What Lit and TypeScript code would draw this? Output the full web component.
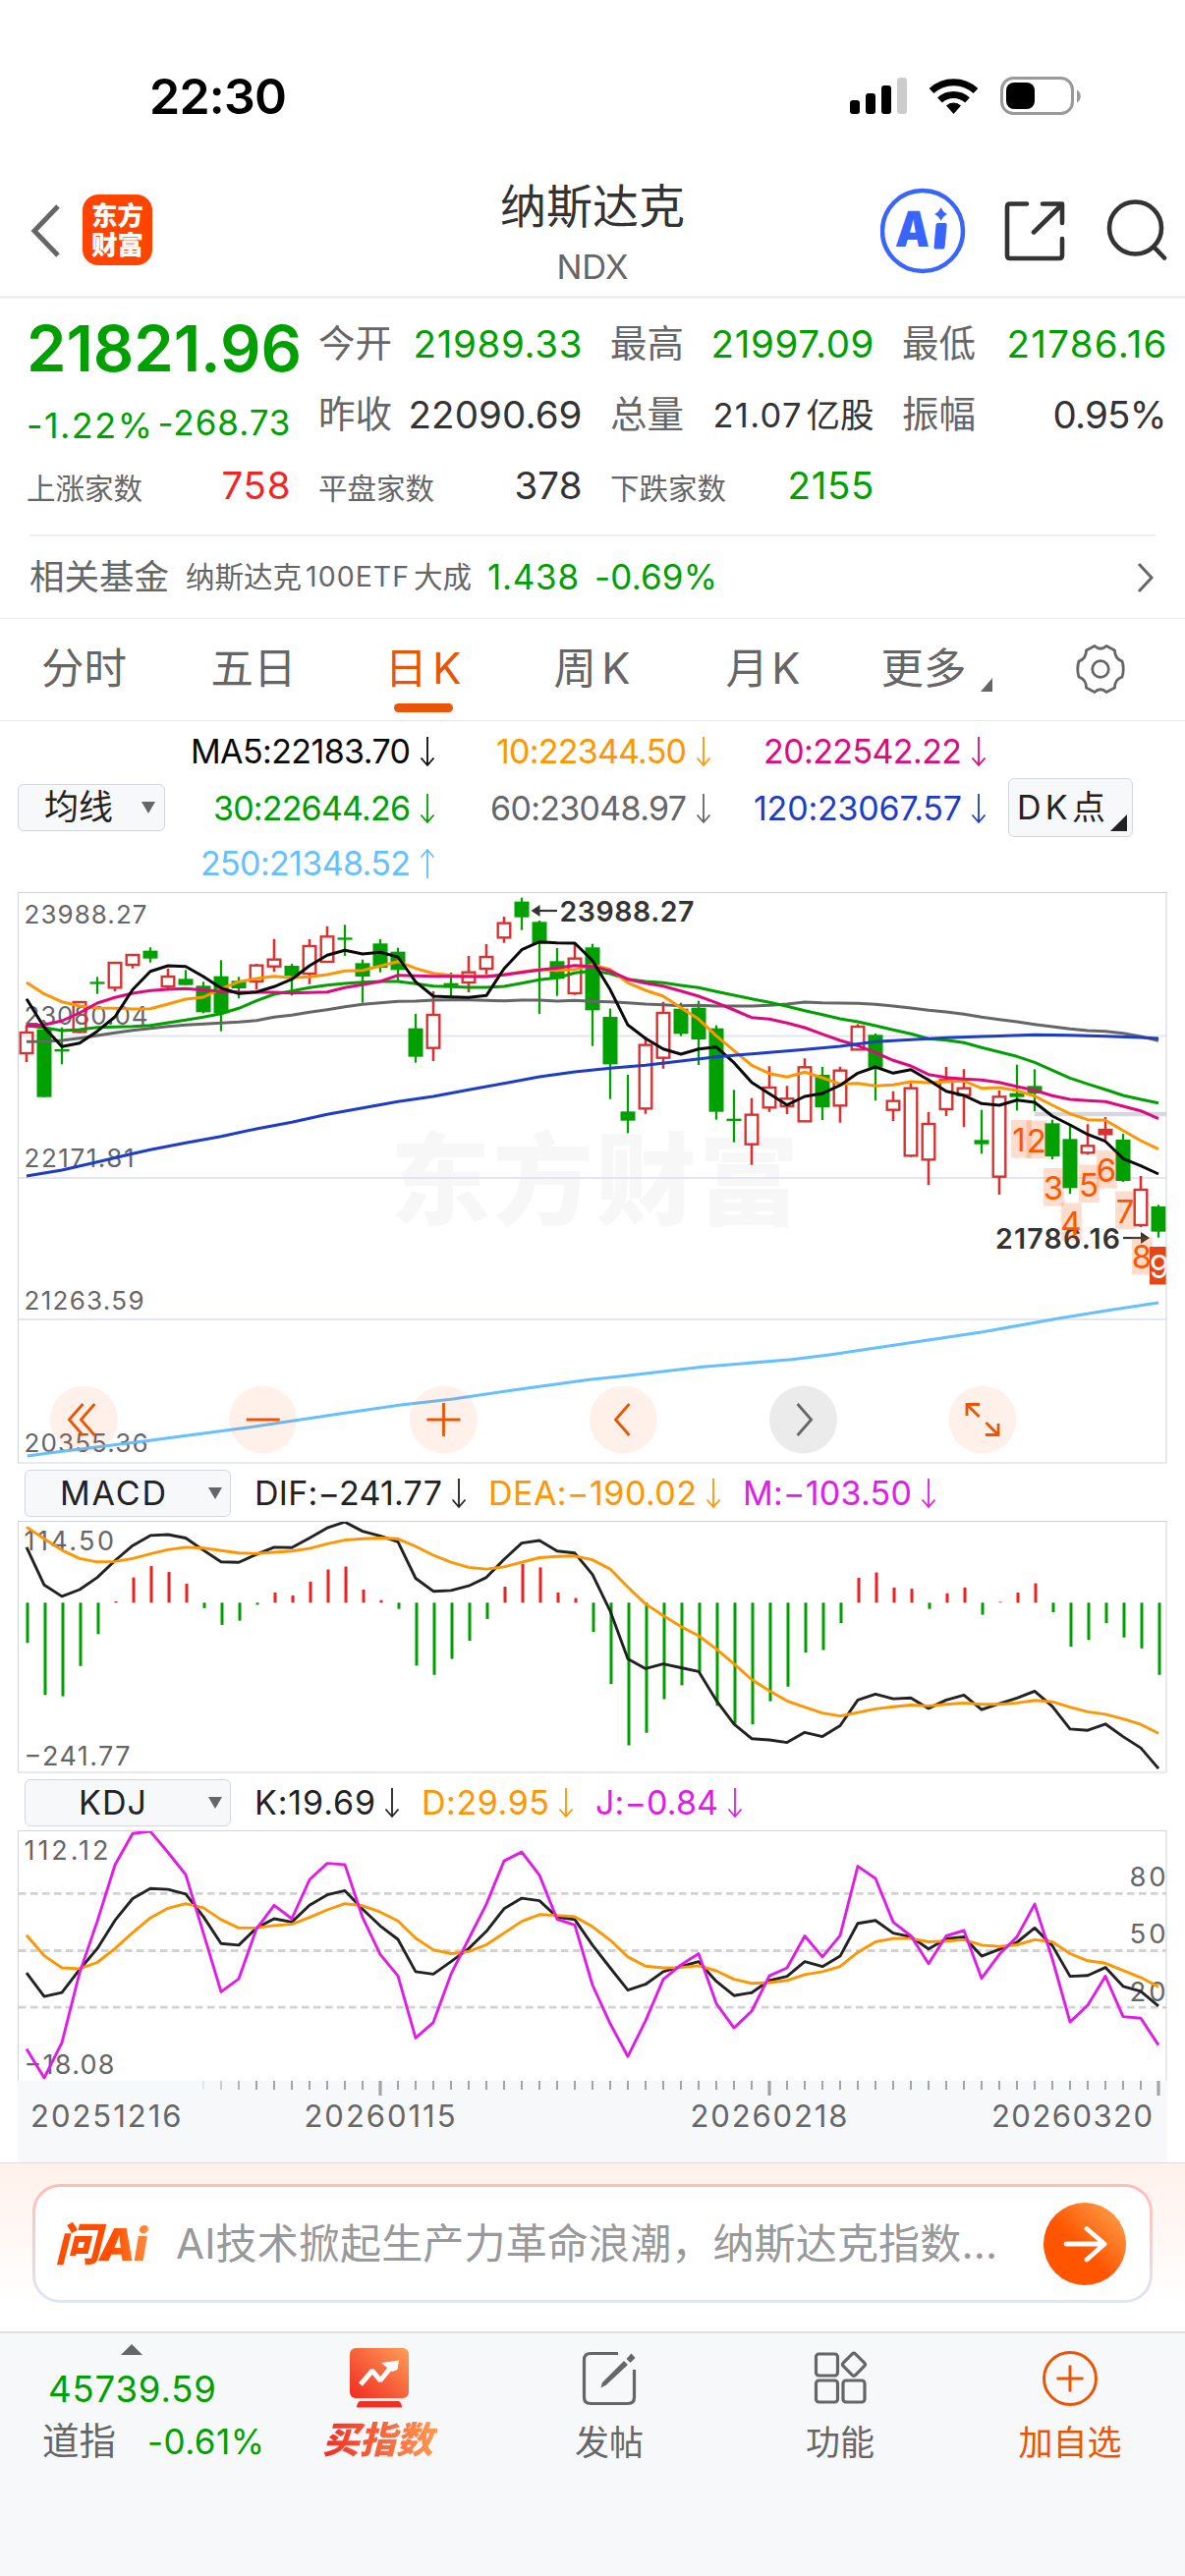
import { LitElement, html, css, svg } from "lit";
import { customElement, property } from "lit/decorators.js";

const STEP = 18;
const X0 = 27;
const LEFT = 18;
const WIDTH = 1170;

const GREEN = "#00a000";
const RED = "#d63232";

/** Candles as [up?, high, bodyTop, bodyBottom, low] in thirds of a pixel below the plot origin. */
const CANDLES: [number, number, number, number, number][] = [
  [1, 430, 453, 516, 543], [0, 443, 443, 650, 650], [0, 437, 504, 509, 550], [1, 360, 360, 451, 455],
  [0, 283, 298, 301, 335], [1, 238, 240, 316, 327], [1, 214, 216, 246, 257], [0, 193, 203, 227, 239],
  [1, 258, 282, 312, 318], [0, 262, 289, 308, 308], [0, 298, 310, 391, 394], [0, 232, 281, 394, 449],
  [0, 283, 295, 318, 349], [1, 243, 248, 297, 322], [1, 167, 230, 251, 268], [0, 243, 249, 280, 340],
  [1, 168, 189, 273, 305], [1, 128, 160, 237, 240], [0, 124, 163, 169, 219], [0, 230, 241, 282, 362],
  [0, 168, 181, 255, 269], [0, 194, 206, 262, 296], [0, 396, 440, 527, 545], [1, 327, 399, 500, 540],
  [0, 270, 302, 305, 345], [1, 219, 269, 300, 330], [1, 183, 222, 258, 275], [1, 99, 119, 163, 179],
  [0, 41, 53, 101, 140], [0, 111, 115, 182, 396], [0, 195, 235, 289, 341], [1, 182, 227, 333, 338],
  [0, 182, 193, 385, 494], [0, 380, 405, 550, 656], [0, 582, 694, 722, 760], [1, 466, 491, 685, 701],
  [1, 359, 393, 530, 563], [0, 362, 380, 457, 464], [0, 356, 377, 474, 552], [0, 431, 440, 695, 719],
  [0, 628, 716, 720, 788], [1, 653, 704, 794, 857], [1, 556, 621, 682, 695], [1, 616, 655, 678, 702],
  [1, 532, 559, 724, 725], [0, 558, 582, 681, 720], [1, 557, 569, 676, 728], [1, 427, 435, 505, 505],
  [0, 456, 460, 560, 661], [1, 632, 662, 689, 723], [1, 607, 623, 829, 833], [1, 695, 732, 841, 919],
  [1, 558, 598, 687, 708], [1, 565, 623, 644, 742], [0, 689, 781, 794, 823], [1, 630, 649, 893, 948],
  [0, 551, 638, 650, 691], [0, 565, 616, 639, 693], [0, 719, 730, 831, 840], [0, 735, 778, 928, 945],
  [1, 733, 799, 820, 826], [1, 711, 750, 763, 780], [0, 762, 780, 906, 909], [1, 891, 933, 1041, 1047],
  [0, 979, 984, 1061, 1079],
];

const MA5 = [350, 437, 496, 485, 449, 405, 322, 266, 249, 251, 282, 317, 334, 329, 313, 290, 249, 217, 202, 213, 208, 222, 298, 342, 344, 346, 340, 258, 200, 176, 179, 180, 233, 322, 430, 471, 503, 519, 503, 497, 545, 605, 640, 674, 648, 639, 614, 577, 558, 577, 566, 598, 632, 645, 670, 675, 659, 666, 708, 735, 764, 785, 838, 860, 885];
const MA10 = [300, 335, 359, 372, 378, 379, 381, 380, 366, 351, 345, 319, 298, 288, 281, 286, 283, 276, 265, 263, 250, 236, 257, 272, 278, 281, 281, 276, 268, 260, 263, 260, 246, 260, 301, 324, 342, 377, 412, 463, 508, 553, 578, 589, 574, 591, 610, 608, 616, 613, 603, 606, 603, 601, 623, 621, 630, 647, 675, 701, 719, 721, 752, 783, 809];
const MA20 = [432, 430, 417, 393, 363, 346, 333, 325, 321, 319, 323, 327, 329, 330, 330, 332, 331, 329, 316, 307, 297, 278, 280, 281, 281, 282, 282, 277, 269, 262, 256, 248, 251, 265, 290, 302, 311, 326, 342, 362, 384, 407, 412, 424, 438, 458, 477, 493, 514, 538, 555, 581, 590, 595, 598, 605, 618, 629, 646, 657, 661, 664, 678, 692, 716];
const MA30 = [432, 438, 447, 444, 437, 436, 434, 431, 423, 415, 406, 395, 379, 356, 336, 326, 316, 308, 303, 299, 297, 297, 304, 311, 313, 315, 315, 312, 302, 292, 286, 271, 265, 273, 290, 297, 301, 309, 316, 328, 339, 350, 361, 373, 386, 398, 411, 420, 432, 445, 457, 472, 476, 484, 499, 512, 526, 544, 568, 592, 610, 627, 645, 657, 668];
const MA60 = [481, 480, 477, 470, 462, 454, 446, 440, 434, 430, 427, 424, 421, 416, 406, 400, 391, 383, 374, 367, 362, 358, 357, 354, 353, 353, 355, 356, 354, 354, 357, 355, 358, 359, 362, 366, 368, 371, 370, 372, 372, 372, 370, 366, 360, 362, 363, 364, 367, 372, 378, 385, 390, 397, 406, 413, 420, 428, 435, 442, 447, 449, 455, 465, 478];
const MA120: [number, number][] = [[0, 891], [2, 873], [4, 848], [6, 823], [7, 811], [9, 790], [11, 770], [13, 747], [15, 727], [17, 703], [19, 683], [21, 664], [23, 648], [25, 628], [27, 608], [29, 588], [31, 573], [33, 562], [35, 553], [37, 540], [39, 527], [41, 518], [44, 505], [46, 495], [48, 481], [50, 475], [52, 469], [54, 465], [57, 460], [59, 461], [61, 464], [63, 468], [64, 471]];
const MA250: [number, number][] = [[27.7, 1482], [47.7, 1479.3], [154, 1466], [254, 1452.7], [351, 1438.3], [408, 1430], [461, 1424], [538, 1412.7], [600, 1404.3], [638, 1400.3], [715, 1391.3], [806, 1383.7], [846, 1378.7], [923, 1367.3], [1000, 1355.7], [1077, 1342], [1131, 1333.3], [1179, 1326]];

const K_SUB = 1568 / 670;

const BARS = [333, 457, 460, 388, 312, 234, 177, 150, 164, 192, 250, 290, 280, 242, 213, 220, 187, 158, 151, 206, 231, 252, 387, 409, 371, 328, 276, 199, 145, 153, 213, 226, 307, 431, 577, 547, 467, 434, 403, 483, 525, 527, 472, 437, 356, 350, 286, 178, 165, 201, 204, 252, 215, 201, 266, 235, 213, 191, 260, 342, 326, 286, 320, 346, 409];
const DIF = [105, 195, 222, 206, 177, 137, 101, 77, 75, 83, 112, 140, 141, 122, 105, 106, 83, 59, 45, 67, 78, 92, 179, 210, 208, 197, 177, 134, 95, 89, 114, 119, 170, 257, 371, 394, 383, 392, 401, 470, 526, 561, 564, 570, 546, 556, 530, 469, 455, 466, 464, 489, 469, 457, 492, 478, 464, 448, 484, 538, 541, 526, 556, 583, 632];
const DEA = [57, 85, 112, 132, 140, 139, 132, 121, 111, 105, 107, 113, 119, 120, 117, 114, 108, 97, 88, 85, 83, 85, 103, 124, 141, 153, 157, 152, 141, 130, 127, 126, 135, 157, 200, 240, 268, 294, 316, 347, 383, 420, 447, 471, 486, 500, 507, 499, 490, 485, 481, 483, 479, 476, 479, 479, 476, 470, 473, 486, 497, 503, 514, 527, 548];
const KL = [1119, 1175, 1166, 1111, 1061, 994, 942, 918, 920, 931, 985, 1049, 1053, 1012, 990, 998, 958, 933, 923, 967, 1007, 1039, 1116, 1122, 1092, 1061, 1020, 966, 941, 947, 986, 992, 1053, 1107, 1160, 1146, 1116, 1104, 1092, 1139, 1173, 1166, 1137, 1127, 1092, 1104, 1079, 1001, 994, 1024, 1033, 1062, 1038, 1033, 1079, 1063, 1046, 1012, 1054, 1127, 1125, 1106, 1151, 1163, 1198];
const DL = [1029, 1078, 1107, 1109, 1094, 1061, 1023, 988, 965, 954, 964, 992, 1012, 1012, 1006, 1003, 987, 969, 954, 959, 974, 995, 1036, 1064, 1073, 1068, 1052, 1024, 996, 980, 982, 985, 1009, 1041, 1081, 1103, 1107, 1106, 1102, 1114, 1134, 1144, 1142, 1137, 1123, 1116, 1104, 1070, 1045, 1037, 1037, 1045, 1043, 1040, 1053, 1056, 1052, 1040, 1045, 1073, 1090, 1096, 1113, 1130, 1152];
const JL = [1300, 1369, 1285, 1119, 996, 862, 787, 782, 832, 885, 1024, 1164, 1133, 1014, 958, 990, 897, 858, 861, 987, 1075, 1126, 1274, 1237, 1122, 1038, 955, 852, 831, 886, 991, 1005, 1148, 1240, 1318, 1233, 1134, 1100, 1073, 1192, 1250, 1210, 1126, 1107, 1031, 1081, 1030, 865, 894, 998, 1031, 1097, 1031, 1018, 1132, 1075, 1033, 955, 1086, 1236, 1196, 1127, 1223, 1227, 1291];

const main = (v: number) => 900 + v / 3;
const sub = (v: number) => 1530 + v / K_SUB;
const line = (vals: number[], f: (v: number) => number) =>
  vals.map((v, i) => `${X0 + STEP * i},${f(v).toFixed(1)}`).join(" ");

const label = (x: number, y: number, w: number, size: number, text: string, cls = "axis") =>
  svg`<text class=${cls} x=${x} y=${y} font-size=${size} textLength=${w}>${text}</text>`;

/** One run of text tracked in or out to a fixed width. */
@customElement("fit-text")
export class FitText extends LitElement {
  static styles = css`
    :host { display: inline-block; white-space: pre; flex: none; }
    .run { display: inline-block; }
  `;
  @property() text = "";
  @property({ type: Number }) w = 0;

  render() {
    return html`<span class="run">${this.text}</span>`;
  }

  firstUpdated() {
    const run = this.renderRoot.querySelector(".run") as HTMLElement;
    const natural = run.getBoundingClientRect().width;
    const gaps = Math.max(1, [...this.text].length - 1);
    run.style.letterSpacing = `${(this.w - natural) / gaps}px`;
    this.style.width = `${this.w}px`;
  }
}

const fit = (text: string, w: number, cls = "") => html`<fit-text class=${cls} .text=${text} .w=${w}></fit-text>`;

const trend = (up = false) => html`<svg class="trend" width="16" height="32" viewBox="0 0 16 32">
  <path d=${up ? "M8 31V2M1.5 9.5L8 2l6.5 7.5" : "M8 1v29M1.5 22.500L8 30l6.5-7.500"} fill="none" stroke="currentColor" stroke-width="1.8"/></svg>`;

@customElement("price-chart")
export class PriceChart extends LitElement {
  static styles = css`
    :host { display: block; height: 582px; font-family: Inter, sans-serif; }
    svg { display: block; }
    .axis { fill: #666; }
    .mark { fill: #333; font-weight: 600; }
    .count { fill: #ff5500; }
    .last { fill: #fff; }
    .wm { fill: #f7f7f7; font-family: "Noto Sans CJK SC", sans-serif; font-weight: 900; }
  `;

  private candle([up, h, t, b, l]: number[], i: number) {
    const x = X0 + STEP * i;
    const [yh, yt, yb, yl] = [h, t, b, l].map(main);
    if (!up)
      return svg`<path d=${`M${x} ${yh}V${yl}`} stroke=${GREEN} stroke-width="2.300"/>
        <rect x=${x - 7.5} y=${yt} width="15" height=${Math.max(2.3, yb - yt)} fill=${GREEN}/>`;
    return svg`<path d=${`M${x} ${yh}V${yt}M${x} ${yb}V${yl}`} stroke=${RED} stroke-width="2.600"/>
      <rect x=${x - 6.3} y=${yt} width="12.600" height=${yb - yt} fill=${b - t < 15 ? RED : "none"} stroke=${RED} stroke-width="2.400"/>`;
  }

  private badge(n: number, x: number, y: number) {
    const last = n === 9;
    return svg`<rect x=${x} y=${y} width="20.800" height="38.500" fill=${last ? "#e64614" : "#ff5500"} fill-opacity=${last ? 1 : 0.2}/>
      <text class=${last ? "last" : "count"} x=${x + (n === 1 ? 8 : 10)} y=${y + 32} font-size="33" text-anchor="middle">${n}</text>`;
  }

  private button(x: number, icon: unknown, gray = false) {
    return svg`<g transform=${`translate(${x} 1445)`} fill="none" stroke=${gray ? "#666" : "#ea5504"} stroke-width="2.800">
      <circle r="34.500" stroke="none" fill=${gray ? "#ebebeb" : "#ff5500"} fill-opacity=${gray ? 1 : 0.085}/>${icon}</g>`;
  }

  render() {
    return html`<svg width="1206" height="582" viewBox="0 908 1206 582">
      <defs><clipPath id="plot"><rect x="18" y="908" width="1169" height="582"/></clipPath></defs>
      ${label(397, 1239, 416, 102, "东方财富", "wm")}
      <path d="M19 1054.500H1187M19 1199H1187M19 1343H1187" stroke="#e3e7ed" stroke-width="2.200"/>
      <path d="M1053 1134H1187" stroke="#d5d7de" stroke-width="4.500"/>
      ${label(24.5, 940, 125, 26, "23988.27")}
      ${label(24.5, 1043, 126, 26, "23080.04")}
      ${label(24.5, 1188, 112, 26, "22171.81")}
      ${label(24.5, 1333, 122, 26, "21263.59")}
      ${label(24.5, 1478, 126, 26, "20355.36")}
      <g clip-path="url(#plot)">${CANDLES.map((c, i) => this.candle(c, i))}</g>
      <g fill="none" stroke-width="3" stroke-linejoin="round">
        <polyline points=${MA250.map((p) => p.join()).join(" ")} stroke="#66bfff"/>
        <polyline points=${line(MA60, main)} stroke="#666"/>
        <polyline points=${line(MA30, main)} stroke=${GREEN}/>
        <polyline points=${line(MA10, main)} stroke="#ff9500"/>
        <polyline points=${line(MA20, main)} stroke="#e0087f"/>
        <polyline points=${line(MA5, main)} stroke="#0a0a0a"/>
        <polyline points=${MA120.map(([i, v]) => `${X0 + STEP * i},${main(v)}`).join(" ")} stroke="#1e3cc8"/>
      </g>
      ${label(569.5, 937.7, 137, 28.5, "23988.27", "mark")}
      <path d="M567 927H547" stroke="#333" stroke-width="2.200"/><path d="M540.500 927l9-6v12z" fill="#333"/>
      ${label(1013, 1271, 127, 28.5, "21786.16", "mark")}
      <path d="M1143 1260H1163" stroke="#333" stroke-width="2.200"/><path d="M1170 1260l-9-6v12z" fill="#333"/>
      <g clip-path="url(#plot)">
        ${[[1029, 1140], [1044.7, 1140.5], [1062, 1189], [1080, 1224.5], [1098, 1185.5], [1116, 1171], [1135, 1212.5], [1152, 1259], [1170, 1269]].map(([x, y], i) => this.badge(i + 1, x, y))}
      </g>
      ${this.button(85.4, svg`<path d="M-1-16L-15 0l14 16M11-16L-3 0l14 16"/>`)}
      ${this.button(267.7, svg`<path d="M-17 0H17"/>`)}
      ${this.button(451.5, svg`<path d="M-17 0H17M0-17V17"/>`)}
      ${this.button(634.5, svg`<path d="M6-16L-8 0L6 16"/>`)}
      ${this.button(817.6, svg`<path d="M-6-16L8 0L-6 16"/>`, true)}
      ${this.button(1000, svg`<path d="M-16-4V-15.500H-3M-16-15.500L-3.500-3M16 4V15.500H3M16 15.500L3.500 3"/>`)}
      <rect x="18.500" y="908.500" width="1168.500" height="580.500" fill="none" stroke="#d0d3d9"/>
    </svg>`;
  }
}

@customElement("macd-chart")
export class MacdChart extends LitElement {
  static styles = css`
    :host { display: block; height: 257px; font-family: Inter, sans-serif; }
    svg { display: block; }
    .axis { fill: #666; }
  `;
  render() {
    return html`<svg width="1206" height="257" viewBox="0 1548 1206 257">
      ${BARS.map((v, i) => {
        const y = sub(v);
        const zero = sub(237);
        return svg`<rect x=${26.5 + STEP * i} y=${Math.min(y, zero)} width="3" height=${Math.abs(y - zero)} fill=${v > 237 ? GREEN : "#f02020"}/>`;
      })}
      ${label(24.5, 1577.5, 91.5, 27, "114.50")}
      ${label(24.5, 1796.5, 108, 27, "−241.77")}
      <g fill="none" stroke-width="2.900" stroke-linejoin="round">
        <polyline points=${line(DIF, sub)} stroke="#222"/>
        <polyline points=${line(DEA, sub)} stroke="#ff9500"/>
      </g>
      <rect x="18.500" y="1548.500" width="1168.500" height="255.500" fill="none" stroke="#d0d3d9"/>
    </svg>`;
  }
}

@customElement("kdj-chart")
export class KdjChart extends LitElement {
  static styles = css`
    :host { display: block; height: 338px; font-family: Inter, sans-serif; }
    svg { display: block; }
    .axis { fill: #666; }
  `;
  render() {
    const ticks = Array.from({ length: 55 }, (_, k) => k + 10);
    const major = [20, 42, 64];
    return html`<svg width="1206" height="338" viewBox="0 1863 1206 338">
      <rect x=${LEFT} y="2118" width=${WIDTH} height="83" fill="#f7f8fa"/>
      <path d=${[930, 1066, 1201].map((v) => `M19 ${sub(v)}H1187`).join("")} stroke="#d2d2d2" stroke-width="2.800" stroke-dasharray="7.500 4.500"/>
      ${label(24.5, 1892.5, 86, 27, "112.12")}
      ${label(24.5, 2111.3, 92, 27, "−18.08")}
      ${label(1149.5, 1920.3, 37, 27.5, "80")}
      ${label(1149.5, 1978.3, 37, 27.5, "50")}
      ${label(1149.5, 2036.5, 37, 27.5, "20")}
      <g fill="none" stroke-width="2.900" stroke-linejoin="round">
        <polyline points=${line(KL, sub)} stroke="#222"/>
        <polyline points=${line(DL, sub)} stroke="#ff9500"/>
        <polyline points=${line(JL, sub)} stroke="#e11be8"/>
      </g>
      ${ticks.map((i) => svg`<path d=${`M${X0 + STEP * i} 2118v${major.includes(i) ? 15 : 9}`} stroke="#999"
        stroke-width=${major.includes(i) ? 3.2 : 2} stroke-opacity=${i === 10 ? 0.2 : i === 11 ? 0.45 : i === 12 ? 0.7 : 0.9}/>`)}
      ${label(31, 2165, 153.5, 31, "20251216")}
      ${label(309.5, 2165, 154, 31, "20260115")}
      ${label(702.5, 2165, 160, 31, "20260218")}
      ${label(1009, 2165, 164, 31, "20260320")}
      <path d="M18.500 2118V1863.500H1187V2118" fill="none" stroke="#d0d3d9"/>
    </svg>`;
  }
}

@customElement("app-root")
export class AppRoot extends LitElement {
  static styles = css`
    :host {
      display: block; width: 1206px; height: 2622px; overflow: hidden; background: #fff; color: #333;
      font-family: Inter, "Noto Sans CJK SC", sans-serif; line-height: 1;
    }
    * { box-sizing: border-box; }
    svg { display: block; flex: none; }

    .status { height: 168px; padding: 68px 105px 0 152px; display: flex; justify-content: space-between; align-items: flex-start; }
    .time { font-size: 50px; line-height: 60px; font-weight: 600; color: #000; }
    .status svg { margin-top: 8px; }

    .nav { height: 136px; border-bottom: 3px solid #eee; display: grid; grid-template-columns: 84px 71px 1fr 300px 10px; }
    .back { margin: 39px 0 0 29px; }
    .logo { margin-top: 30px; width: 71px; height: 72px; border-radius: 16px; background: #ff4400; color: #fff;
      font: 900 26.5px/29.500px "Noto Sans CJK SC", sans-serif; text-align: center; padding: 5px 0 0; }
    .title { padding-left: 155px; text-align: center; }
    .name { font-size: 47px; line-height: 50px; margin-top: 17px; }
    .code { font-size: 34.500px; line-height: 40px; margin-top: 17px; color: #666; }
    .ai { font-weight: 900; fill: #3865ff; }

    .quote { height: 240px; padding: 10px 18.500px 0 27px; display: grid; grid-template-columns: 297px 297px 297px 1fr; grid-template-rows: 72px 72px 72px; }
    .cell { display: flex; justify-content: space-between; align-items: center; color: #666; font-size: 37.500px; }
    .cell.c1, .cell.c2 , .cell.c3 { padding-right: 28.500px; }
    .cell .v { font-size: 38.500px; color: #333; }
    .cell .g { color: #00a000; }
    .cell .r { color: #f52222; }
    .cell .small { font-size: 29.500px; padding-top: 8px; }
    .cell .s { font-size: 34.500px; padding-top: 3px; display: flex; gap: 5px; }
    .cell.big { font-size: 65px; font-weight: 600; color: #00a000; padding-top: 9px; }
    .cell.chg { padding-top: 21px; font-size: 36px; color: #00a000; }
    .chg .amt { font-size: 35px; padding-bottom: 4px; }

    .fund { height: 85px; margin: 0 30px; border-top: 2px solid #eee; display: flex; align-items: center; color: #666; font-size: 35.500px; }
    .fname { font-size: 29.500px; margin-left: 17px; }
    .etf { font-size: 28.500px; margin: 0 5px 0 4px; }
    .fsuf { font-size: 29.500px; }
    .fv { color: #00a000; font-size: 35px; margin-left: 16px; }
    .push { margin-left: auto; }

    .tabs { height: 105px; border-top: 1px solid #e8e8e8; border-bottom: 1px solid #e8e8e8; padding-left: 42px; display: flex; font-size: 43.500px; color: #666; line-height: 101px; }
    .tab { flex: none; width: 172.500px; white-space: pre; }
    .tab.w { width: 177px; }
    .tab.x { width: 172px; }
    .tab.k { width: 175px; }
    .tab.m { width: 158px; }
    .on { color: #ea5504; }
    .bar { width: 60px; height: 9px; border-radius: 5px; background: #ea5504; margin: -15px 0 0 9px; }
    .tri { margin: 60px 0 0 14px; }
    .more { display: flex; width: 197px; }
    .gear { margin-top: 25px; }

    .legend { height: 174px; padding: 0 53px 0 18px; display: grid; grid-template-columns: 150px 275px 281px 280px 1fr; grid-template-rows: 60px 55px 57px; align-items: center; }
    .item { display: flex; align-items: center; justify-content: flex-end; gap: 9px; font-size: 34px; padding-top: 2px; }
    .pick { display: flex; align-items: center; justify-content: space-between; border: 1.500px solid #d3d6dc; border-radius: 6px; background: #f7f8fa; color: #222; }
    .pick.ma { grid-row: 2; height: 48px; padding: 0 9px 0 26px; font-size: 35px; }
    .pick.dk { grid-column: 5; grid-row: 2; justify-self: end; width: 127px; height: 60px; font-size: 34px; padding-left: 8px; position: relative; }
    .dk svg { position: absolute; right: 5px; bottom: 5px; }

    .sub { height: 58px; padding-left: 25px; display: flex; align-items: center; font-size: 34px; color: #222; padding-top: 1px; }
    .sub.kdj { height: 58px; padding-top: 2px; }
    .sub .pick { width: 210px; height: 48px; padding: 0 8px 0 35px; margin-right: 24px; }
    .sub.kdj .pick { padding-left: 54px; }
    .stat { display: flex; align-items: center; gap: 9px; margin-right: 22px; }
    .black { color: #0a0a0a; } .orange { color: #ff9500; } .pink { color: #e0087f; } .gray { color: #666; }
    .green { color: #00a000; } .blue { color: #1e3cc8; } .sky { color: #66bfff; } .mag { color: #e11be8; }

    .ask { height: 174px; border-top: 1px solid #d9dbe3; padding: 21px 33px 0; background: linear-gradient(#fff1eb, #fff 85%); border-bottom: 2px solid #dcdfe3; }
    .box { height: 121px; padding: 3px; border-radius: 28px; background: linear-gradient(#ffbdb3, #dde7f5); }
    .inner { height: 100%; border-radius: 25px; background: #fff; display: flex; align-items: center; padding: 0 24px 0 20px; }
    .askai { font-size: 46px; font-weight: 900; font-style: italic; width: 104px; padding-right: 4px; line-height: 60px; white-space: nowrap; letter-spacing: -1px; background: linear-gradient(90deg, #ff4d00 55%, #ff9a4d); -webkit-background-clip: text; color: transparent; }
    .ph { color: #999; font-size: 42px; margin-left: 19px; }
    .go { margin-left: auto; }

    .bottom { height: 247px; background: #f7f8fa; display: grid; grid-template-columns: 283px 206px 262px 208px 1fr; font-size: 35px; color: #666; }
    .col { display: flex; flex-direction: column; align-items: center; }
    .col.add { color: #ea5504; padding-left: 13px; }
    .index { padding: 11px 0 0 43px; }
    .index .up { margin-left: 80px; }
    .index .px { display: block; margin: 16px 0 0 6px; font-size: 36.500px; line-height: 38px; color: #00a000; }
    .index .row { display: flex; align-items: center; margin-top: 15px; font-size: 37.500px; line-height: 38px; }
    .index .pc { margin-left: 32px; font-size: 35px; color: #00a000; }
    .buy svg { margin-top: 15px; }
    .buy .t { margin: 9px 3px 0 0; font: italic 900 37.500px/40px "Noto Sans CJK SC", sans-serif; background: linear-gradient(90deg, #ee2a24, #ff9a52); -webkit-background-clip: text; color: transparent; padding: 0 4px; }
    .col .l { margin-top: 16px; line-height: 40px; }
    .col .ic { margin-top: 17px; }
  `;

  private item(cls: string, text: string, w: number, up = false) {
    return html`<div class="item ${cls}">${fit(text, w)}${trend(up)}</div>`;
  }

  private down() {
    return html`<svg width="14" height="12" viewBox="0 0 14 12"><path d="M0 0H14L7 12z" fill="#666"/></svg>`;
  }

  private stat(cls: string, text: string, w: number) {
    return html`<div class="stat ${cls}">${fit(text, w)}${trend()}</div>`;
  }

  render() {
    return html`
      <div class="status">
        ${fit("22:30", 140, "time")}
        <svg width="236" height="44" viewBox="865 76 236 44">
          <rect x="865" y="102" width="10" height="14" rx="3"/><rect x="881" y="95" width="10" height="21" rx="3"/>
          <rect x="897" y="87" width="10" height="29" rx="3"/><rect x="913" y="79" width="10" height="37" rx="3" fill="#ccc"/>
          <g fill="none" stroke="#000" stroke-width="7"><path d="M948 92.500a33 33 0 0 1 45 0"/><path d="M956.500 102a20.500 20.500 0 0 1 28 0"/></g>
          <path d="M963 107.500a11 11 0 0 1 15 0L970.500 116z"/>
          <rect x="1019.500" y="79.500" width="72" height="36" rx="12" fill="none" stroke="#999" stroke-width="3"/>
          <rect x="1024" y="84" width="29" height="27" rx="8"/><path d="M1096 91.500c5 2.500 5 10.500 0 13z" fill="#999"/>
        </svg>
      </div>

      <div class="nav">
        <svg class="back" width="34" height="56" viewBox="0 0 34 56"><path d="M30 3L6 28L30 53" fill="none" stroke="#666" stroke-width="5"/></svg>
        <div class="logo">东方<br>财富</div>
        <div class="title"><div class="name">纳斯达克</div><div class="code">NDX</div></div>
        <svg width="300" height="130" viewBox="896 168 300 130">
          <circle cx="939" cy="235" r="41" fill="none" stroke="#3865ff" stroke-width="4.500"/>
          <text class="ai" x="911" y="251" font-size="50" textLength="35" lengthAdjust="spacingAndGlyphs" transform="skewX(-3) translate(13 0)">A</text>
          <path d="M952.500 229q.2-2 2-2h7.500q1.800 0 1.600 2l-2 22.500q-.2 2-2 2h-7.500q-1.800 0-1.600-2z" fill="#3865ff"/>
          <path d="M957.600 211q2 5 6.500 7q-4.500 2-6.500 7q-2-5-6.500-7q4.500-2 6.500-7z" fill="#3865ff"/>
          <g fill="none" stroke="#333" stroke-width="4.600" stroke-linecap="round" stroke-linejoin="round">
            <path d="M1045 207.500H1028q-3 0-3 3V260q0 3 3 3H1078q3 0 3-3V243M1061 207.500H1081V227M1080 209L1052 236.500"/>
            <circle cx="1155.500" cy="232" r="26.500"/><path d="M1174.500 251.500L1185 262.500"/>
          </g>
        </svg>
      </div>

      <div class="quote">
        <div class="cell c1 big">${fit("21821.96", 280)}</div>
        <div class="cell c2">今开${fit("21989.33", 172, "v g")}</div>
        <div class="cell c3">最高${fit("21997.09", 166, "v g")}</div>
        <div class="cell">最低${fit("21786.16", 163, "v g")}</div>
        <div class="cell c1 chg">${fit("-1.22%", 128)}${fit("-268.73", 135, "amt")}</div>
        <div class="cell c2">昨收${fit("22090.69", 177, "v")}</div>
        <div class="cell c3">总量<span class="v s">${fit("21.07", 90)}亿股</span></div>
        <div class="cell">振幅${fit("0.95%", 116, "v")}</div>
        <div class="cell c1"><span class="small">上涨家数</span>${fit("758", 70, "v r")}</div>
        <div class="cell c2"><span class="small">平盘家数</span>${fit("378", 69, "v")}</div>
        <div class="cell c3"><span class="small">下跌家数</span>${fit("2155", 88, "v g")}</div>
      </div>

      <div class="fund">
        相关基金<span class="fname">纳斯达克</span>${fit("100ETF", 105, "etf")}<span class="fsuf">大成</span>
        ${fit("1.438", 93, "fv")}${fit("-0.69%", 125, "fv")}
        <svg class="push" width="20" height="34" viewBox="0 0 20 34"><path d="M3 3L16 17L3 31" fill="none" stroke="#666" stroke-width="3"/></svg>
      </div>

      <div class="tabs">
        <div class="tab">分时</div>
        <div class="tab w">五日</div>
        <div class="tab x on">${fit("日 K", 78)}<div class="bar"></div></div>
        <div class="tab k">${fit("周 K", 78)}</div>
        <div class="tab m">${fit("月 K", 76)}</div>
        <div class="more">更多<svg class="tri" width="12" height="14" viewBox="0 0 12 14"><path d="M12 0V14H0z" fill="#666"/></svg></div>
        <svg class="gear" width="52" height="52" viewBox="-26 -26 52 52" fill="none" stroke="#666" stroke-width="2.800">
          <path stroke-linejoin="round" d="M-6-23.500Q0-18 6-23.500L14.500-19Q14.500-10.500 22-8Q24.500 0 22 8Q14.500 10.500 14.500 19L6 23.500Q0 18-6 23.500L-14.500 19Q-14.500 10.500-22 8Q-24.500 0-22-8Q-14.500-10.500-14.500-19Z"/>
          <circle r="8.300"/>
        </svg>
      </div>

      <div class="legend">
        <i></i>${this.item("black", "MA5:22183.70", 224)}${this.item("orange", "10:22344.50", 194)}${this.item("pink", "20:22542.22", 202)}<i></i>
        <div class="pick ma">均线${this.down()}</div>
        ${this.item("green", "30:22644.26", 201)}${this.item("gray", "60:23048.97", 200)}${this.item("blue", "120:23067.57", 212)}
        <div class="pick dk">${fit("DK点", 90)}<svg width="17" height="17" viewBox="0 0 17 17"><path d="M17 0V17H0z" fill="#222"/></svg></div>
        <i></i>${this.item("sky", "250:21348.52", 214, true)}
      </div>

      <price-chart></price-chart>

      <div class="sub">
        <div class="pick">${fit("MACD", 108)}${this.down()}</div>
        ${this.stat("", "DIF:−241.77", 191)}${this.stat("orange", "DEA:−190.02", 212)}${this.stat("mag", "M:−103.50", 172)}
      </div>
      <macd-chart></macd-chart>
      <div class="sub kdj">
        <div class="pick">${fit("KDJ", 69)}${this.down()}</div>
        ${this.stat("", "K:19.69", 123)}${this.stat("orange", "D:29.95", 130)}${this.stat("mag", "J:−0.84", 125)}
      </div>
      <kdj-chart></kdj-chart>

      <div class="ask"><div class="box"><div class="inner">
        <span class="askai">问Ai</span>
        ${fit("AI技术掀起生产力革命浪潮，纳斯达克指数...", 836, "ph")}
        <svg class="go" width="84" height="84" viewBox="0 0 84 84">
          <defs><linearGradient id="go" x1="0.200" y1="0.800" x2="0.900" y2="0.100"><stop offset="0.350" stop-color="#ff5500"/><stop offset="1" stop-color="#ff9a45"/></linearGradient></defs>
          <circle cx="42" cy="42" r="42" fill="url(#go)"/>
          <path d="M23 42H61M44 26.500L62 42L44 58" fill="none" stroke="#fff" stroke-width="4.800" stroke-linecap="round" stroke-linejoin="round"/>
        </svg>
      </div></div></div>

      <div class="bottom">
        <div class="index">
          <svg class="up" width="22" height="11" viewBox="0 0 22 11"><path d="M0 11L11 0L22 11z" fill="#666"/></svg>
          ${fit("45739.59", 171, "px")}
          <div class="row">道指${fit("-0.61%", 119, "pc")}</div>
        </div>
        <div class="col buy">
          <svg width="60" height="62" viewBox="0 0 60 62">
            <defs><linearGradient id="buy" x1="0" y1="1" x2="1" y2="0"><stop offset="0" stop-color="#f02a20"/><stop offset="1" stop-color="#ff9e58"/></linearGradient></defs>
            <rect width="60" height="51" rx="6" fill="url(#buy)"/><path d="M10 54H50q3 2 3 6.500H7Q7 56 10 54z" fill="#f03022"/>
            <path d="M11 37L23 23L31 33L44 17" fill="none" stroke="#fff" stroke-width="5" stroke-linejoin="bevel"/><path d="M32 15L50 12.500L48.500 22L43 24z" fill="#fff"/>
          </svg>
          <span class="t">买指数</span>
        </div>
        <div class="col">
          <svg class="ic" width="58" height="58" viewBox="0 0 58 58" fill="none" stroke="#666" stroke-width="3.200">
            <path d="M38 3.500H10Q3.500 3.500 3.500 10V48Q3.500 54.500 10 54.500H48Q54.500 54.500 54.500 48V20"/>
            <path d="M22 33L44 11l4 4L26 35.500l-5.500 3z" fill="#666" stroke="none"/><path d="M46.500 9L51.500 3.500l4 4.500L50.500 13z" fill="#666" stroke="none"/>
          </svg>
          <span class="l">发帖</span>
        </div>
        <div class="col">
          <svg class="ic" width="56" height="58" viewBox="0 0 56 58" fill="none" stroke="#666" stroke-width="3.200">
            <rect x="3.500" y="4" width="22" height="22" rx="3"/><rect x="3.500" y="31" width="22" height="22" rx="3"/><rect x="31" y="31" width="22" height="22" rx="3"/>
            <rect x="33.200" y="6" width="17.500" height="17.500" rx="2.500" transform="rotate(45 42 14.750)"/>
          </svg>
          <span class="l">功能</span>
        </div>
        <div class="col add">
          <svg class="ic" width="58" height="58" viewBox="0 0 58 58" fill="none" stroke="#ea5504" stroke-width="3"><circle cx="29" cy="29" r="26.500"/><path d="M15.500 29H42.500M29 15.500V42.500"/></svg>
          <span class="l">加自选</span>
        </div>
      </div>
    `;
  }
}
